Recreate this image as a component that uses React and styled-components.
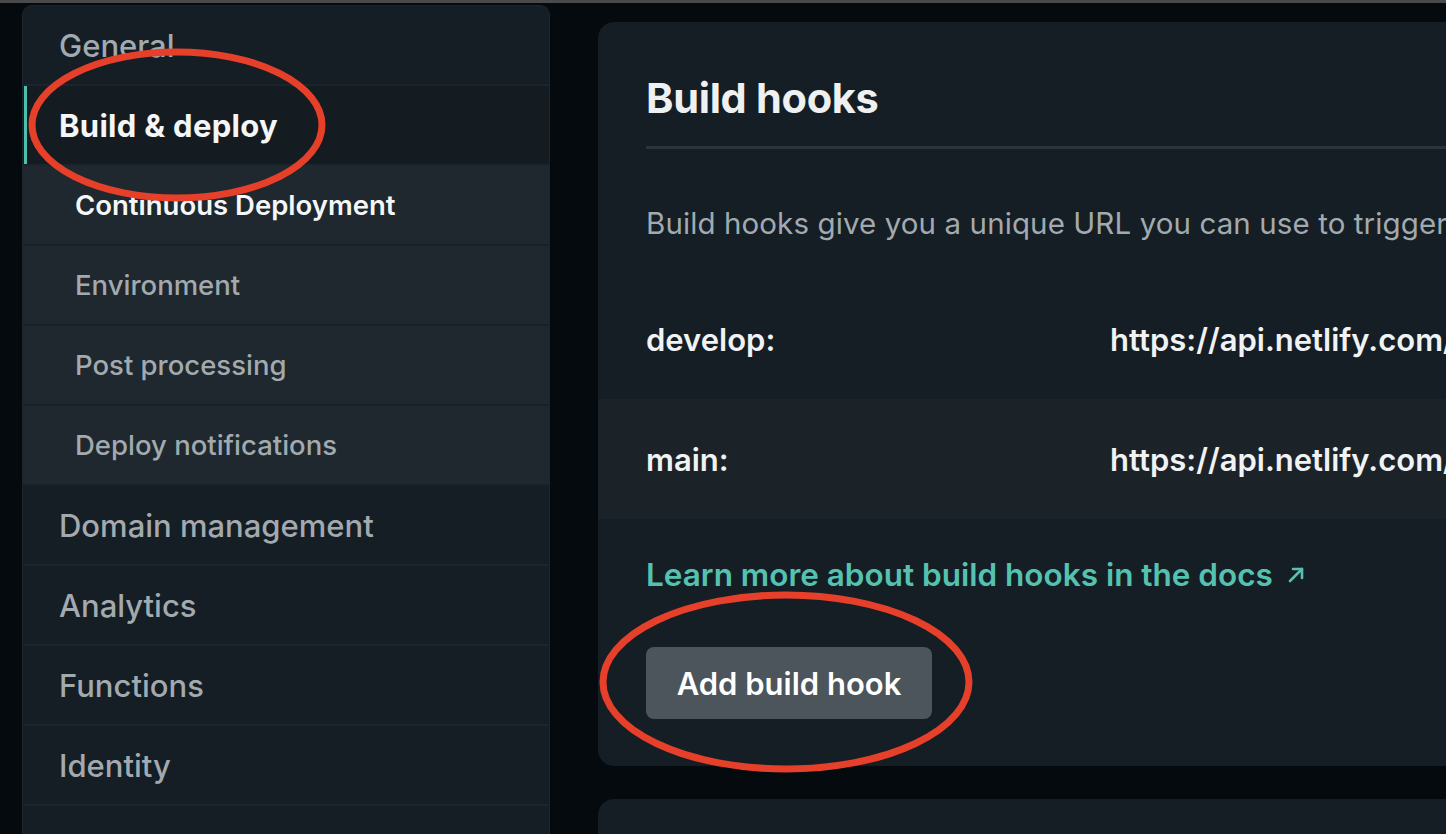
import React from "react";
import styled, { createGlobalStyle } from "styled-components";

const Global = createGlobalStyle`
  html, body { margin: 0; padding: 0; background: #040a0d; }
  body { font-family: Inter, "Noto Sans", Roboto, sans-serif; overflow: hidden; -webkit-font-smoothing: antialiased; }
  * { box-sizing: border-box; }
`;

const Page = styled.div`
  position: relative;
  width: 1446px;
  height: 834px;
  overflow: hidden;
  background: #040a0d;
`;

const TopStrip = styled.div`
  height: 3px;
  background: #4a4a4a;
`;

const Layout = styled.div`
  display: flex;
  align-items: flex-start;
  gap: 48px;
  padding-left: 22px;
`;

const Sidebar = styled.nav`
  flex: 0 0 528px;
  margin-top: 2px;
  background: #162027;
  border: 1px solid #1c262c;
  border-bottom: none;
  border-radius: 10px 10px 0 0;
  overflow: hidden;
  display: flex;
  flex-direction: column;
`;

const NavItem = styled.div`
  position: relative;
  height: 80px;
  display: flex;
  align-items: center;
  padding-left: ${(p) => (p.$sub ? 52 : 36)}px;
  background: ${(p) => (p.$sub ? "#1e282e" : p.$active ? "#141c21" : "#151e24")};
  border-bottom: 2px solid ${(p) => (p.$sub ? "#182126" : "#1b252b")};
  color: ${(p) => (p.$active ? "#f4f6f7" : "#a2aaaf")};
  font-size: ${(p) => (p.$sub ? 27.5 : 31)}px;
  font-weight: ${(p) => (p.$active ? (p.$sub ? 600 : 700) : 500)};
  letter-spacing: ${(p) => (p.$active && !p.$sub ? "0.3px" : "0")};
  white-space: nowrap;
  &::before {
    content: "";
    display: ${(p) => (p.$bar ? "block" : "none")};
    position: absolute;
    left: 1px;
    top: 0;
    bottom: 0;
    width: 3px;
    background: #4fbfad;
  }
`;

const Main = styled.main`
  flex: 0 0 960px;
  margin-top: 19px;
  display: flex;
  flex-direction: column;
  gap: 33px;
`;

const Card = styled.section`
  background: #151e24;
  border-radius: 16px;
  padding: ${(p) => (p.$empty ? "0" : "50px 0 47px")};
  min-height: ${(p) => (p.$empty ? "120px" : "0")};
  display: flex;
  flex-direction: column;
`;

const Heading = styled.h2`
  margin: 0 0 0 48px;
  font-size: 41.5px;
  line-height: 52px;
  font-weight: 700;
  color: #eef0f1;
  letter-spacing: -0.3px;
`;

const Divider = styled.div`
  margin: 22px 0 0 48px;
  height: 3px;
  background: #2a353b;
`;

const Description = styled.p`
  margin: 54px 0 0 48px;
  font-size: 29.5px;
  line-height: 40px;
  color: #a2aaaf;
  white-space: nowrap;
  letter-spacing: 0.1px;
`;

const HookRow = styled.div`
  margin-top: ${(p) => (p.$first ? 36 : 0)}px;
  height: 120px;
  display: flex;
  align-items: center;
  padding-left: 48px;
  background: ${(p) => (p.$alt ? "#1b2329" : "#151e24")};
  color: #f0f2f3;
  font-size: 31px;
  font-weight: 600;
  white-space: nowrap;
`;

const HookName = styled.span`
  flex: 0 0 464px;
`;

const HookUrl = styled.span``;

const DocsLink = styled.a`
  margin: 36px 0 0 48px;
  display: inline-flex;
  align-items: center;
  gap: 14px;
  align-self: flex-start;
  font-size: 31.5px;
  line-height: 40px;
  font-weight: 600;
  color: #55c2b0;
  text-decoration: none;
  white-space: nowrap;
`;

const Button = styled.button`
  margin: 52px 0 0 48px;
  align-self: flex-start;
  width: 286px;
  height: 72px;
  border: none;
  border-radius: 8px;
  background: #4b555b;
  color: #ffffff;
  font-family: inherit;
  font-size: 31px;
  font-weight: 600;
`;

const Overlay = styled.svg`
  position: absolute;
  left: 0;
  top: 0;
  pointer-events: none;
`;

const navItems = [
  { label: "General" },
  { label: "Build & deploy", active: true, bar: true },
  { label: "Continuous Deployment", sub: true, active: true },
  { label: "Environment", sub: true },
  { label: "Post processing", sub: true },
  { label: "Deploy notifications", sub: true },
  { label: "Domain management" },
  { label: "Analytics" },
  { label: "Functions" },
  { label: "Identity" },
  { label: "" },
];

const hooks = [
  { name: "develop:", url: "https://api.netlify.com/build_hooks/64b2a1f0c3e7d9001a2f6c8e" },
  { name: "main:", url: "https://api.netlify.com/build_hooks/64b2a1f8d4e1c7002b3e9a1d" },
];

export default function App() {
  return (
    <Page>
      <Global />
      <TopStrip />
      <Layout>
        <Sidebar>
          {navItems.map((it, i) => (
            <NavItem key={i} $sub={it.sub} $active={it.active} $bar={it.bar}>
              {it.label}
            </NavItem>
          ))}
        </Sidebar>
        <Main>
          <Card>
            <Heading>Build hooks</Heading>
            <Divider />
            <Description>
              Build hooks give you a unique URL you can use to trigger a build and deploy of your site.
            </Description>
            {hooks.map((h, i) => (
              <HookRow key={h.name} $first={i === 0} $alt={i % 2 === 1}>
                <HookName>{h.name}</HookName>
                <HookUrl>{h.url}</HookUrl>
              </HookRow>
            ))}
            <DocsLink href="#">
              Learn more about build hooks in the docs
              <svg width="18" height="18" viewBox="0 0 18 18" fill="none" stroke="#55c2b0" strokeWidth="2.6" strokeLinecap="round" strokeLinejoin="round">
                <path d="M3 15 L15 3" />
                <path d="M6 3 H15 V12" />
              </svg>
            </DocsLink>
            <Button>Add build hook</Button>
          </Card>
          <Card $empty />
        </Main>
      </Layout>
      <Overlay width="1446" height="834" viewBox="0 0 1446 834">
        <ellipse cx="177" cy="125" rx="145" ry="73" fill="none" stroke="#e6402a" strokeWidth="7" />
        <ellipse cx="786" cy="682" rx="183" ry="87" fill="none" stroke="#e6402a" strokeWidth="7" />
      </Overlay>
    </Page>
  );
}
